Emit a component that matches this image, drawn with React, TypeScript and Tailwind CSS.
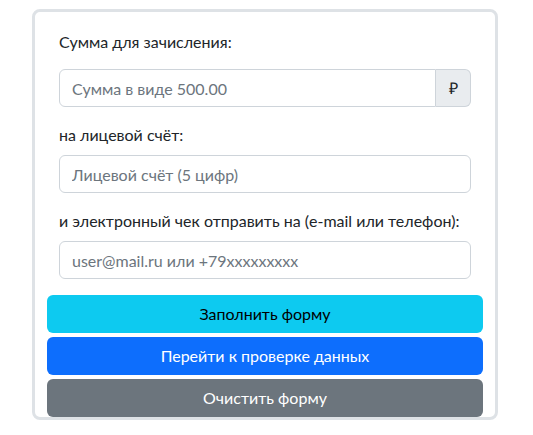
import React, { useState } from 'react';

interface FormData {
  amount: string;
  account: string;
  receipt: string;
}

const inputClass =
  'w-full h-[38px] px-3 bg-white border border-[#ced4da] rounded-md text-base text-[#212529] placeholder:text-[#6c757d] focus:outline-none';

const App: React.FC = () => {
  const [formData, setFormData] = useState<FormData>({
    amount: '',
    account: '',
    receipt: '',
  });

  const handleChange = (e: React.ChangeEvent<HTMLInputElement>) => {
    const { name, value } = e.target;
    setFormData(prev => ({ ...prev, [name]: value }));
  };

  const clearForm = () => setFormData({ amount: '', account: '', receipt: '' });

  return (
    <div className="min-h-screen bg-white pt-[9px] font-['Lato',sans-serif] text-[#212529]">
      <div className="ml-[32px] w-[466px] rounded-lg border-[3px] border-[#dee2e6] bg-white">
        <div className="px-6 pt-[18px]">
          <label htmlFor="amount" className="block text-base leading-6 mb-[15px]">
            Сумма для зачисления:
          </label>
          <div className="flex">
            <input
              id="amount"
              name="amount"
              type="text"
              placeholder="Сумма в виде 500.00"
              value={formData.amount}
              onChange={handleChange}
              className={inputClass + ' rounded-r-none'}
            />
            <span className="flex h-[38px] w-[35px] shrink-0 items-center justify-center rounded-r-md border border-l-0 border-[#ced4da] bg-[#e9ecef] text-base">
              ₽
            </span>
          </div>

          <label htmlFor="account" className="block text-base leading-6 mt-4 mb-2">
            на лицевой счёт:
          </label>
          <input
            id="account"
            name="account"
            type="text"
            placeholder="Лицевой счёт (5 цифр)"
            value={formData.account}
            onChange={handleChange}
            className={inputClass}
          />

          <label htmlFor="receipt" className="block text-base leading-6 mt-4 mb-2">
            и электронный чек отправить на (e-mail или телефон):
          </label>
          <input
            id="receipt"
            name="receipt"
            type="text"
            placeholder="user@mail.ru или +79xxxxxxxxx"
            value={formData.receipt}
            onChange={handleChange}
            className={inputClass}
          />
        </div>

        <div className="flex flex-col gap-1 px-3 pt-4">
          <button type="button" className="h-[38px] w-full rounded-md bg-[#0dcaf0] text-base text-black">
            Заполнить форму
          </button>
          <button type="button" className="h-[38px] w-full rounded-md bg-[#0d6efd] text-base text-white">
            Перейти к проверке данных
          </button>
          <button type="button" onClick={clearForm} className="h-[38px] w-full rounded-md bg-[#6c757d] text-base text-white">
            Очистить форму
          </button>
        </div>
      </div>
    </div>
  );
};

export default App;
